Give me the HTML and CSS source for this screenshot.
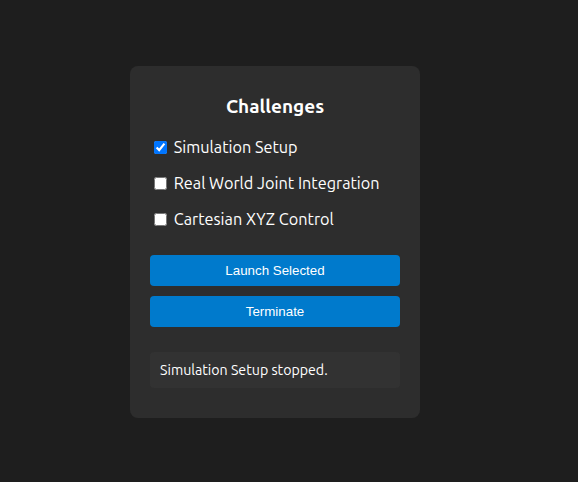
FILE: index.html
```html
<!DOCTYPE html>
<html>
<head>
<meta charset="utf-8">
<link rel="stylesheet" href="styles.css">
</head>
<body>
<div class="card">
  <h3 class="title">Challenges</h3>
  <div class="list">
    <label class="item"><input type="checkbox" checked> Simulation Setup</label>
    <label class="item"><input type="checkbox"> Real World Joint Integration</label>
    <label class="item"><input type="checkbox"> Cartesian XYZ Control</label>
  </div>
  <div class="actions">
    <button class="btn">Launch Selected</button>
    <button class="btn">Terminate</button>
  </div>
  <div class="status">Simulation Setup stopped.</div>
</div>
</body>
</html>
```
FILE: styles.css
```css
html, body {
  margin: 0;
  padding: 0;
  background: #1e1e1e;
  height: 100%;
}
body {
  font-family: "Ubuntu", "Open Sans", "Noto Sans", sans-serif;
  color: #ffffff;
  display: flex;
  justify-content: center;
  padding: 66px 28px 0 0;
  box-sizing: border-box;
}
.card {
  width: 290px;
  box-sizing: border-box;
  background: #2d2d2d;
  border-radius: 8px;
  padding: 28px 20px 30px;
  display: flex;
  flex-direction: column;
  align-self: flex-start;
}
.title {
  margin: 0;
  font-size: 19px;
  line-height: 24px;
  font-weight: 700;
  text-align: center;
}
.list {
  display: flex;
  flex-direction: column;
  margin-top: 11px;
}
.item {
  display: flex;
  align-items: center;
  height: 36px;
  font-size: 16.25px;
  white-space: pre;
}
.item input {
  margin: 0 3px 0 4px;
  width: 13px;
  height: 13px;
}
.actions {
  display: flex;
  flex-direction: column;
  gap: 10px;
  margin-top: 18px;
}
.btn {
  height: 31px;
  border: none;
  border-radius: 4px;
  background: #007acc;
  color: #ffffff;
  font-family: "Liberation Sans", Arial, sans-serif;
  font-size: 13.333px;
  padding: 0;
}
.status {
  margin-top: 25px;
  height: 36px;
  box-sizing: border-box;
  background: #323232;
  border-radius: 4px;
  padding: 0 10px;
  display: flex;
  align-items: center;
  font-size: 14.2px;
}
```
